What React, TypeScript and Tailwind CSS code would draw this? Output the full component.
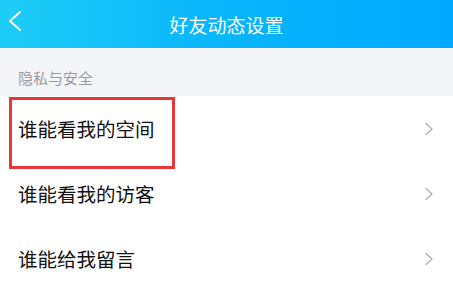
const rows = ["谁能看我的空间", "谁能看我的访客", "谁能给我留言"];

const font = {
  fontFamily: '"Noto Sans CJK SC", "Noto Sans", sans-serif',
};

export default function App() {
  return (
    <div className="h-[286px] w-[453px] overflow-hidden bg-white" style={font}>
      <div className="relative flex h-12 items-center justify-center bg-gradient-to-r from-[#1ecdf7] via-[#0ab6fb] via-45% to-[#00a8ff]">
        <svg
          className="absolute left-[8px] top-[10px] h-[22px] w-[14px]"
          viewBox="0 0 14 22"
          fill="none"
          stroke="white"
          strokeWidth="2"
          strokeLinecap="round"
          strokeLinejoin="round"
        >
          <path d="M12 2 L2 11 L12 20" />
        </svg>
        <span className="text-[19px] leading-none text-white">好友动态设置</span>
      </div>
      <div className="h-px bg-white" />
      <div className="flex h-[47px] items-center bg-[#f4f5f9] pl-[18px] pt-[12px] text-[15px] text-[#9a9a9e]">
        隐私与安全
      </div>
      <div className="flex flex-col">
        {rows.map((label, i) => (
          <div key={label} className="relative flex h-[65px] items-center justify-between pl-[18px] pr-[19px]">
            {i === 0 && (
              <div className="pointer-events-none absolute left-[9px] top-[1px] h-[72px] w-[166px] border-[3px] border-[#e5383b]" />
            )}
            <span className="text-[19.5px] leading-none text-[#111]">{label}</span>
            <svg
              className="h-[14px] w-[10px]"
              viewBox="0 0 10 14"
              fill="none"
              stroke="#b4b4b8"
              strokeWidth="1.6"
              strokeLinecap="round"
              strokeLinejoin="round"
            >
              <path d="M2 1.5 L8 7 L2 12.5" />
            </svg>
          </div>
        ))}
      </div>
    </div>
  );
}
